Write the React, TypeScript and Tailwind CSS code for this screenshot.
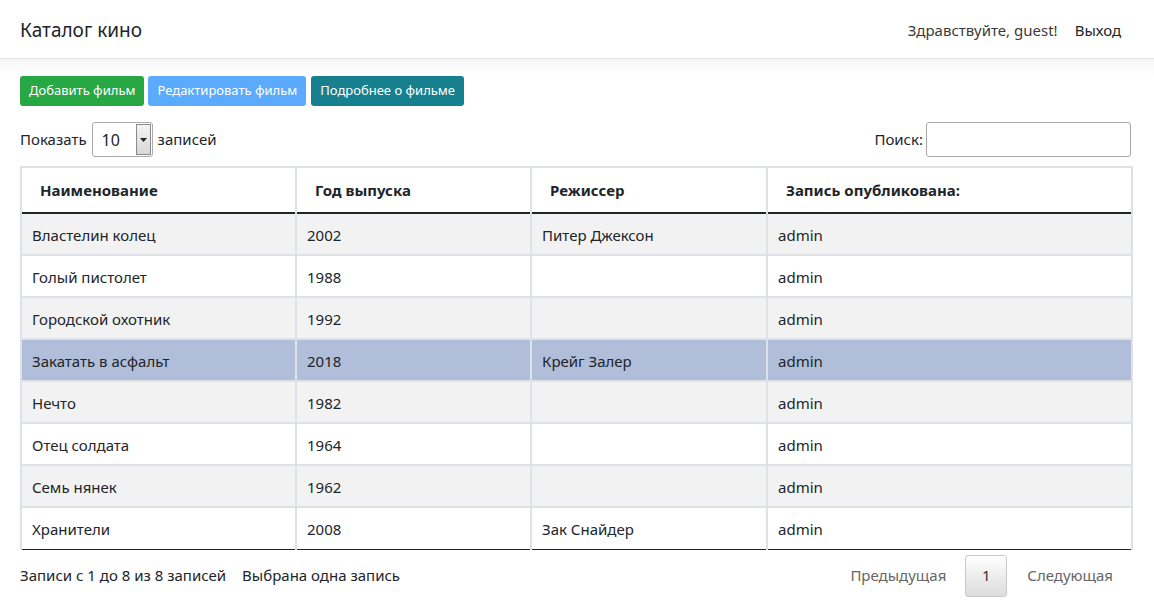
import React from "react";

// ── Data ───────────────────────────────────────────────────────────────────

const FILMS = [
  { title: "Властелин колец", year: "2002", director: "Питер Джексон", author: "admin" },
  { title: "Голый пистолет", year: "1988", director: "", author: "admin" },
  { title: "Городской охотник", year: "1992", director: "", author: "admin" },
  { title: "Закатать в асфальт", year: "2018", director: "Крейг Залер", author: "admin" },
  { title: "Нечто", year: "1982", director: "", author: "admin" },
  { title: "Отец солдата", year: "1964", director: "", author: "admin" },
  { title: "Семь нянек", year: "1962", director: "", author: "admin" },
  { title: "Хранители", year: "2008", director: "Зак Снайдер", author: "admin" },
];

const SELECTED = 3;

const FONT = "font-['Noto_Sans','Open_Sans',sans-serif]";

// ── App ────────────────────────────────────────────────────────────────────

export default function App() {
  return (
    <div className={`${FONT} min-h-screen bg-white text-[#212529]`}>
      {/* ── Navbar ── */}
      <header className="flex h-[59px] items-center justify-between border-b border-[#e3e3e3] bg-white pl-5 pr-[33px] pt-[2px]">
        <span className="text-[19px] text-[#212529]">Каталог кино</span>
        <div className="flex items-center gap-[17px] text-[15px]">
          <span className="text-[#3a3a3a]">Здравствуйте, guest!</span>
          <span className="text-[#212529]">Выход</span>
        </div>
      </header>

      <main className="bg-gradient-to-b from-[#f7f7f7] to-white to-[18px] px-5 pt-[17px]">
        {/* ── Actions ── */}
        <div className="flex gap-1 text-[13px] text-white">
          <button className="h-[30px] rounded-[3px] bg-[#28a745] px-[9px]">Добавить фильм</button>
          <button className="h-[30px] rounded-[3px] bg-[#5aabfe] px-[9px]">Редактировать фильм</button>
          <button className="ml-px h-[30px] rounded-[3px] bg-[#17808f] px-[9px]">Подробнее о фильме</button>
        </div>

        {/* ── Controls ── */}
        <div className="mt-[16px] flex items-center justify-between pr-[3px] text-[15px]">
          <div className="flex items-center gap-[5px]">
            <span>Показать</span>
            <div className="flex h-[35px] w-[61px] items-center justify-between rounded-[3px] border border-[#a9a9a9] bg-white pl-[9px]">
              <span className="text-[16px]">10</span>
              <span className="mr-px flex h-[31px] w-[15px] items-center justify-center border border-[#8a8a8a] bg-gradient-to-b from-[#f4f4f4] to-[#d8d8d8]">
                <svg width="7" height="4" viewBox="0 0 7 4"><path d="M0 0h7L3.5 4z" fill="#222" /></svg>
              </span>
            </div>
            <span>записей</span>
          </div>
          <div className="flex items-center gap-[3px]">
            <span>Поиск:</span>
            <div className="h-[35px] w-[205px] rounded-[3px] border border-[#a9a9a9] bg-white" />
          </div>
        </div>

        {/* ── Table ── */}
        <table className="mt-[9px] w-[1113px] table-fixed border-collapse border-x-2 border-t-2 border-[#dee2e6] text-[15px]">
          <colgroup>
            <col className="w-[275px]" />
            <col className="w-[235px]" />
            <col className="w-[236px]" />
            <col />
          </colgroup>
          <thead>
            <tr className="h-[46px] border-b-2 border-b-[#212529]">
              {["Наименование", "Год выпуска", "Режиссер", "Запись опубликована:"].map((h) => (
                <th key={h} className="border-x-2 border-[#dee2e6] pl-[18px] text-left font-bold">
                  {h}
                </th>
              ))}
            </tr>
          </thead>
          <tbody>
            {FILMS.map((f, i) => (
              <tr
                key={f.title}
                className={[
                  "h-[42px]",
                  i === SELECTED ? "bg-[#b0bed9]" : i % 2 === 0 ? "bg-[#f2f2f2]" : "bg-white",
                  i === FILMS.length - 1 ? "border-b border-b-[#212529]" : "border-b-2 border-b-[#dee2e6]",
                ].join(" ")}
              >
                {[f.title, f.year, f.director, f.author].map((v, ci) => (
                  <td key={ci} className="border-x-2 border-[#dee2e6] pl-[10px] pt-[2px]">
                    {v}
                  </td>
                ))}
              </tr>
            ))}
          </tbody>
        </table>

        {/* ── Footer ── */}
        <div className="mt-[5px] flex items-center justify-between pr-[21px] text-[15px]">
          <div className="flex gap-[16px]">
            <span>Записи с 1 до 8 из 8 записей</span>
            <span>Выбрана одна запись</span>
          </div>
          <div className="flex items-center text-[#666]">
            <span className="px-[19px]">Предыдущая</span>
            <span className="flex h-[42px] w-[42px] items-center justify-center rounded-[3px] border border-[#cacaca] bg-gradient-to-b from-white to-[#dcdcdc] text-[#333]">
              1
            </span>
            <span className="pl-[20px]">Следующая</span>
          </div>
        </div>
      </main>
    </div>
  );
}
